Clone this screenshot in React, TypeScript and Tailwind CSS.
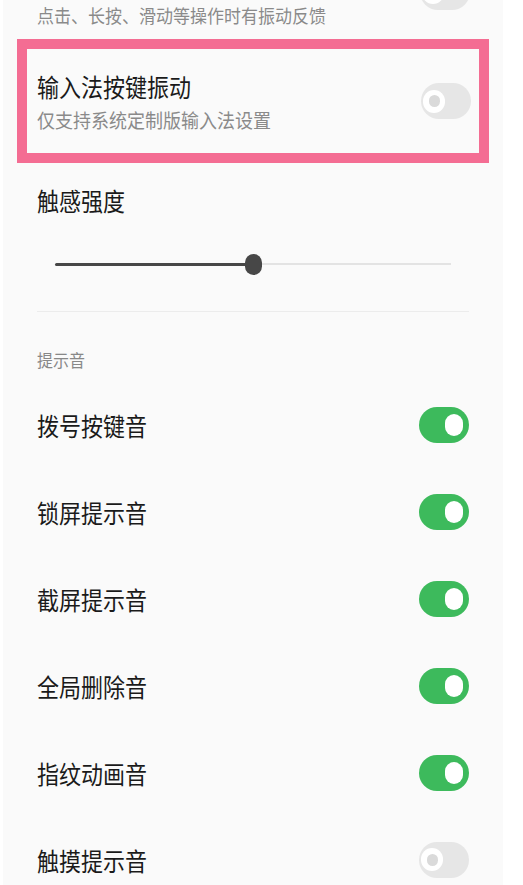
const font = { fontFamily: '"Noto Sans CJK SC", "Noto Sans", sans-serif' }

function Toggle({ on }: { on: boolean }) {
  if (on) {
    return (
      <div className="flex h-[36px] w-[50px] shrink-0 items-center justify-end rounded-full bg-[#3dba5c] pr-[6px]">
        <div className="h-[22px] w-[18px] rounded-full bg-white" />
      </div>
    )
  }
  return (
    <div className="flex h-[36px] w-[50px] shrink-0 items-center rounded-full bg-[#e6e6e6] pl-[2px]">
      <div className="flex h-[23px] w-[22px] items-center justify-center rounded-full bg-white">
        <div className="h-[12px] w-[11px] rounded-full bg-[#dadada]" />
      </div>
    </div>
  )
}

const sounds = [
  { label: '拨号按键音', on: true },
  { label: '锁屏提示音', on: true },
  { label: '截屏提示音', on: true },
  { label: '全局删除音', on: true },
  { label: '指纹动画音', on: true },
  { label: '触摸提示音', on: false },
]

export default function App() {
  return (
    <div className="h-[885px] w-[523px] overflow-hidden bg-white" style={font}>
      <div className="ml-[3px] h-full w-[500px] bg-[#fafafa]">
        {/* previous row, cut off at the top */}
        <div className="flex h-[39px] justify-between pl-[34px] pr-[33px]">
          <p className="inline-block scale-y-[1.1] pt-[6px] text-[17px] leading-[20px] text-[#8a8a8a]">
            点击、长按、滑动等操作时有振动反馈
          </p>
          <div className="mt-[-26px]">
            <Toggle on={false} />
          </div>
        </div>

        {/* highlighted row */}
        <div className="mx-[14px] flex h-[124px] items-center justify-between border-[10px] border-[#f46d93] pl-[10px] pr-[8px]">
          <div>
            <div className="scale-y-[1.12] text-[22px] leading-[28px] text-[#1a1a1a]">输入法按键振动</div>
            <div className="mt-[8px] scale-y-[1.1] text-[18px] leading-[22px] text-[#8a8a8a]">仅支持系统定制版输入法设置</div>
          </div>
          <Toggle on={false} />
        </div>

        {/* haptic strength */}
        <div className="mx-[34px] border-b border-[#ececec] pt-[23px]">
          <div className="scale-y-[1.12] text-[22px] leading-[28px] text-[#1a1a1a]">触感强度</div>
          <div className="flex h-[97px] items-center pl-[18px] pr-[18px] pt-[3px]">
            <div className="h-[3px] w-[190px] rounded-l-full bg-[#474747]" />
            <div className="h-[21px] w-[17px] shrink-0 rounded-full bg-[#474747]" />
            <div className="h-[2px] flex-1 bg-[#e3e3e3]" />
          </div>
        </div>

        {/* sounds */}
        <div className="px-[34px] pt-[36px]">
          <div className="scale-y-[1.1] text-[16px] leading-[22px] text-[#888888]">提示音</div>
          <div className="pt-[11px]">
            {sounds.map((s) => (
              <div key={s.label} className="flex h-[87px] items-center justify-between">
                <span className="inline-block scale-y-[1.12] text-[22px] leading-[28px] text-[#1a1a1a]">{s.label}</span>
                <Toggle on={s.on} />
              </div>
            ))}
          </div>
        </div>
      </div>
    </div>
  )
}
